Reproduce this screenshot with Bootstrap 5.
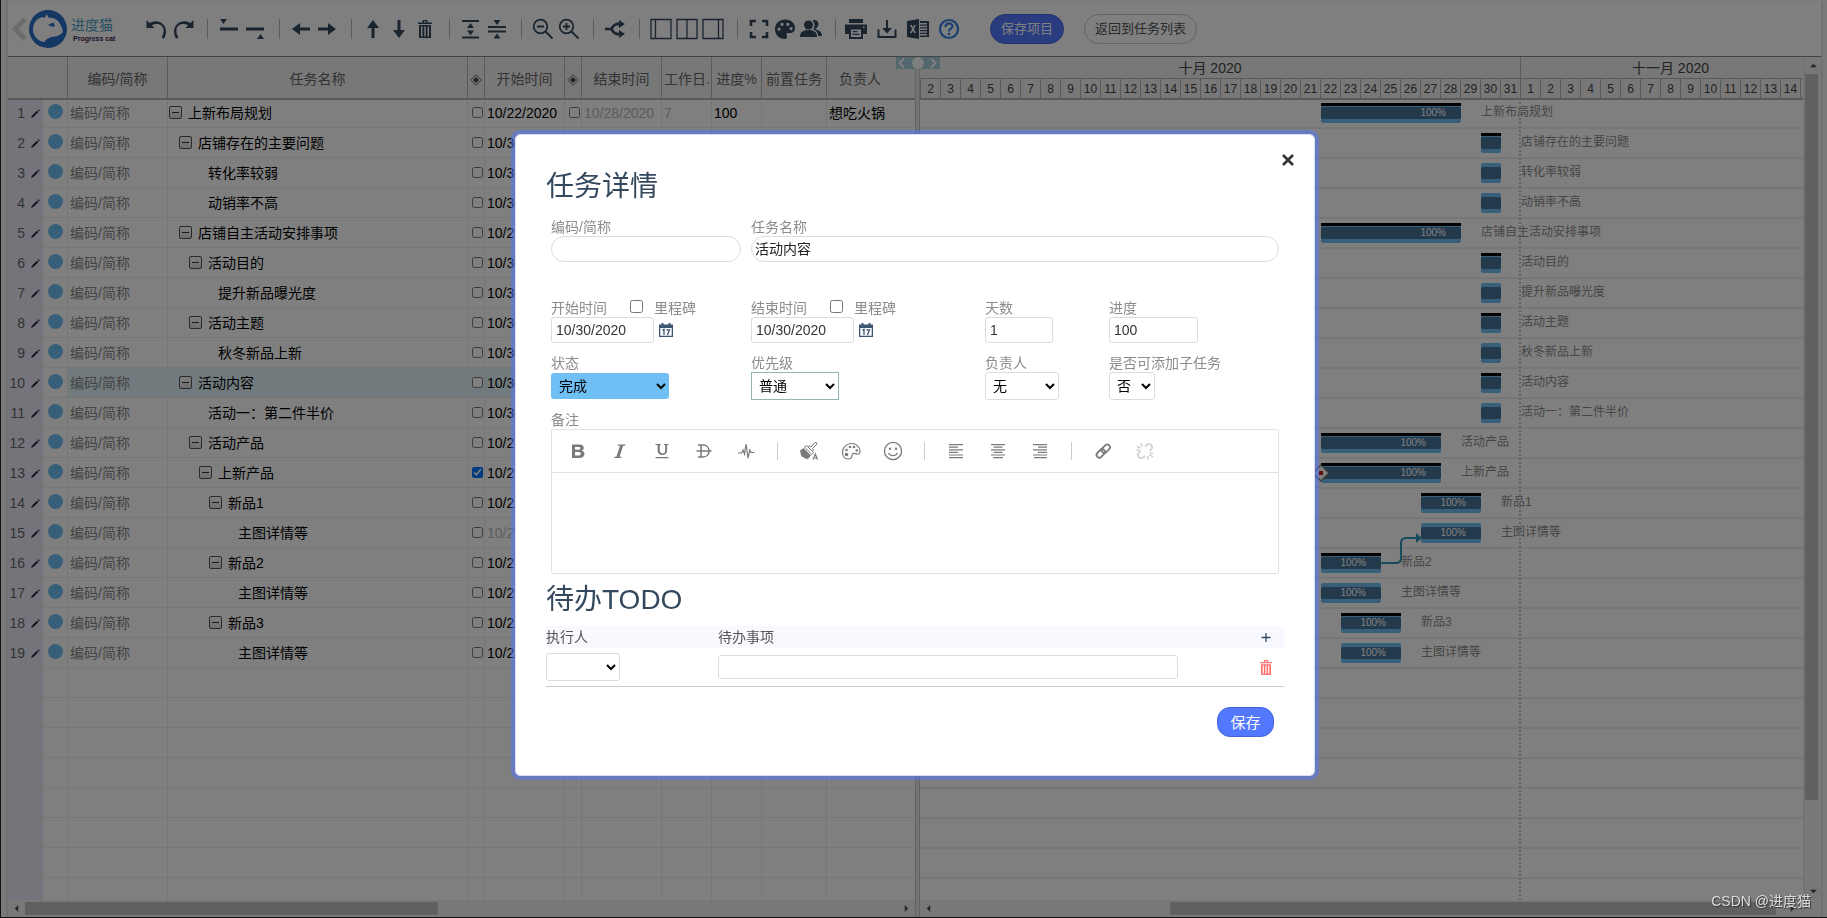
<!DOCTYPE html>
<html lang="zh-CN">
<head>
<meta charset="utf-8">
<meta name="viewport" content="width=device-width, initial-scale=1">
<title>进度猫</title>
<link href="https://cdn.jsdelivr.net/npm/bootstrap@5.3.0/dist/css/bootstrap.min.css" rel="stylesheet">
<style>
  :root { --line:#ededed; --head-line:#b4b4b4; --ink:#34495e; --day:20px; --row:30px; }
  body { font-family:"Liberation Sans","Noto Sans CJK SC",sans-serif; font-size:14px; line-height:18px; color:#000; background:#fff; }
  button { font:inherit; }
  .app-frame { height:100vh; padding:1px 4px 0 5px; border-left:1px solid #223; border-bottom:1px solid #222; background:#f4f4f4; }
  .app-inner { background:#fff; border-left:2px solid #e2e2e2; border-right:2px solid #e2e2e2; }
  /* toolbar */
  .tool-strip { height:57px; border-bottom:1px solid #888; color:var(--ink); padding-left:3px; }
  .brand-word { width:54px; color:#4e9fc4; font-size:14px; line-height:20px; }
  .brand-word span { display:block; font-size:7px; line-height:8px; font-weight:bold; color:#402850; padding-left:2px; }
  .brand-logo { margin-left:2px; }
  .tool-nav { margin-left:19px; }
  .tool { width:26px; height:30px; padding:0; border:0; background:none; color:inherit; display:flex; align-items:center; justify-content:center; flex:none; }
  .tool svg, .ed-tool svg { width:22px; height:22px; fill:currentColor; }
  .tool-gap { width:1px; height:20px; background:#b8b8b8; margin:0 8px 0 11px; flex:none; }
  .tools-wide { margin-left:-4px; }
  .tools-wide .tool { width:31px; }
  .pill { height:30px; border-radius:15px; font-size:13px; line-height:18px; padding:0 10px; border:1px solid #c8c8c8; background:#fff; color:#555; white-space:nowrap; margin-left:20px; }
  .pill-main { background:#5178ff; border-color:#4463d8; color:#fff; margin-left:26px; }
  /* grid */
  .grid-pane { width:907px; flex:none; }
  .task-grid { width:100%; table-layout:fixed; border-collapse:separate; border-spacing:0; white-space:nowrap; }
  .task-grid th { height:41px; background:#f0f0f0; border-right:1px solid var(--head-line); box-shadow:0 2px 0 var(--head-line); position:relative; font-weight:normal; color:#666; text-align:center; padding:2px 2px 0; overflow:hidden; }
  .task-grid td { height:var(--row); border-right:1px solid var(--line); border-bottom:1px solid var(--line); padding:0 2px; overflow:hidden; }
  .task-grid th:last-child, .task-grid td:last-child { border-right:0; }
  .task-grid th:last-child { padding-right:24px; }
  .task-grid td.name-cell { padding-left:1px; }
  .task-grid td.num-cell { padding:0; background:linear-gradient(90deg,#ebe9f5 35px,transparent 35px); }
  .num-box { width:17px; text-align:right; color:#666; }
  .num-cell svg { width:9px; height:9px; margin:2px 1px 0 6px; fill:#222c3c; }
  .dot { width:15px; height:15px; border-radius:50%; background:#6fbff5; margin-left:7px; margin-bottom:3px; }
  .active-row td { background-color:#e2f4fa; }
  .fold { width:13px; height:13px; padding:0; border:1px solid #555; border-radius:2px; background:linear-gradient(#fff,#ddd); margin-right:6px; position:relative; flex:none; }
  .fold::after { content:""; position:absolute; left:2px; right:2px; top:5px; height:1px; background:#333; }
  .fold-none { width:19px; flex:none; }
  .task-grid input { width:11px; height:11px; margin:0 0 0 2px; display:block; }
  .task-grid .box-cell { padding-left:2px; }
  .muted { color:#888; } .faint { color:#b8b8b8; }
  /* splitter */
  .splitter { width:5px; flex:none; background:#e6e6e6; border-left:1px solid #c6c6c6; border-right:1px solid #c6c6c6; position:relative; z-index:2; }
  .split-grip { position:absolute; left:-20px; top:0; width:44px; height:12px; background:#a5d0dc; }
  .split-grip svg { display:block; overflow:visible; }
  /* timeline */
  .time-pane { min-width:0; }
  .month-row { height:22px; color:#444; border-bottom:1px solid var(--head-line); background:#f0f0f0; }
  .month-row div { flex:none; text-align:center; line-height:22px; }
  .month-oct { width:600px; padding-right:20px; }
  .month-nov { width:300px; border-left:1px solid var(--head-line); }
  .day-row { height:19px; background:#f0f0f0; position:relative; z-index:1; box-shadow:0 2px 0 var(--head-line); }
  .day-row div { width:var(--day); flex:none; border-left:1px solid var(--head-line); text-align:center; font-size:12px; line-height:20px; color:#444; }
  .lane { height:var(--row); border-top:1px solid var(--line); border-bottom:1px solid var(--line); padding:4px 0 0 1px; white-space:nowrap; }
  .bar { height:20px; border-radius:2px; background:#6fbff5; padding-top:4px; position:relative; flex:none; }
  .bar-in { height:12px; border-radius:2px; background:#467498; color:#fff; font-size:10px; line-height:12px; text-align:right; padding-right:15px; overflow:hidden; }
  .bar.parent { border-top:3px solid #000; padding-top:1px; border-radius:0 0 2px 2px; }
  .bar-label { margin-left:20px; font-size:12px; color:#8c8c8c; }
  .diamond { position:absolute; left:-9px; top:-2px; width:18px; height:18px; }
  .month-line { position:absolute; left:599px; top:0; bottom:0; width:2px; background:repeating-linear-gradient(#c8c8c8 0 2px,transparent 2px 4px); }
  .link-line { position:absolute; left:461px; top:430px; width:42px; height:40px; }
  /* scrollbars */
  .vbar { width:18px; flex:none; background:#f1f1f1; border-left:2px solid #e8e8e8; padding:0 3px 0 0; }
  .vbar-thumb { background:#c1c1c1; flex:723; }
  .vbar-rest { flex:83; }
  .hbars { height:17px; background:#f1f1f1; flex:none; }
  .hbars .thumb { height:13px; background:#c1c1c1; }
  .caret { width:17px; height:17px; display:flex; align-items:center; justify-content:center; flex:none; }
  .caret svg { width:7px; height:7px; fill:#505050; }
  /* dialog */
  .task-modal { padding-left:3px; }
  .task-modal .modal-dialog { max-width:800px; margin:134px auto 0; }
  .task-modal .modal-content { border:1px solid #d8def4; border-radius:5px; box-shadow:0 0 0 4px rgba(81,120,255,.5); padding:32px 30px 38px; }
  .dlg-title { font-size:28px; line-height:40px; font-weight:normal; color:var(--ink); margin:0; }
  .dlg-close { position:absolute; right:17px; top:16px; width:18px; height:18px; padding:3px; border:0; background:none; display:flex; }
  .fields { margin:0 5px; }
  .fields label { color:#8c8c8c; display:block; }
  .grid-a { display:grid; grid-template-columns:190fr 528fr; gap:10px; margin-top:11px; }
  .grid-b { display:grid; grid-template-columns:200fr 234fr 124fr 170fr; row-gap:11px; margin-top:37px; }
  .box { border:1px solid #dcdcdc; border-radius:3px; background:#fff; height:26px; padding:0 4px; color:#333; display:block; font-size:14px; }
  .box.round { border-radius:13px; padding:0 3px 2px; width:100%; color:#222; }
  .w-date { width:103px; } .w-days { width:68px; } .w-prog { width:89px; } .w-status { width:118px; } .w-prio { width:88px; } .w-who { width:74px; } .w-yes { width:46px; }
  select.box { height:28px; color:#000; padding:0 2px 0 3px; }
  select.box.w-status { height:26px; margin-top:1px; border:0; background:#6fbff5; padding:0 3px 0 4px; }
  select.box.w-prio { border-color:#8fb5b5; border-radius:0; }
  .mile { position:absolute; left:79px; top:0; }
  .mile input { width:13px; height:13px; margin:0 11px 3px 0; }
  .cal { width:14px; height:14px; margin-left:5px; }
  .editor { border:1px solid #e2e2e2; border-radius:2px; }
  .ed-bar { height:43px; border-bottom:1px solid #e2e2e2; padding-left:5px; color:#7a7a7a; }
  .ed-tool { width:42px; height:30px; border:0; padding:0; background:none; color:inherit; display:flex; align-items:center; justify-content:center; flex:none; }
  .ed-tool svg { width:20px; height:20px; }
  .ed-gap { width:1px; height:18px; background:#ccc; margin:0 10px; flex:none; }
  .note-label { margin-top:11px; }
  .editor textarea { display:block; width:100%; height:100px; border:0; resize:none; padding:8px; outline:0; }
  .todo-title { margin-top:6px; }
  .todo { width:100%; table-layout:fixed; border-bottom:1px solid #ccc; border-collapse:separate; border-spacing:0; margin-top:6px; }
  .todo th { height:22px; background:#f8f9ff; color:#555; font-weight:normal; padding:0; }
  .todo td { height:38px; padding:0; }
  .todo .box.line { width:460px; height:24px; }
  .icon-btn { border:0; background:none; padding:0; display:block; width:36px; height:18px; }
  .icon-btn svg { display:block; margin-left:9px; }
  .save-btn { width:57px; height:30px; padding:2px 0 0; border:1px solid #4463d8; border-radius:13px; background:#5178ff; color:#fff; font-size:15px; line-height:20px; margin:20px 10px 0 auto; display:block; }
  .watermark { position:fixed; right:16px; bottom:8px; z-index:1060; color:#ddd; text-shadow:1px 1px 1px #333; pointer-events:none; }
</style>
</head>
<body>
<svg width="0" height="0" class="position-absolute">
  <symbol id="bin" viewBox="0 0 14 18"><path d="M4.500 0h5v2.500H14V4H0V2.500h4.500zM6 1.200v1.300h2V1.200zM1 5h12v13H1zM3 6.500v10h1.400v-10zm3.300 0v10h1.400v-10zm3.300 0v10H11v-10z" fill-rule="evenodd"/></symbol>
</svg>

<div class="app-frame">
<div class="app-inner h-100 d-flex flex-column overflow-hidden">
  <header class="tool-strip d-flex align-items-center">
    <svg width="16" height="24" viewBox="0 0 16 24" fill="none" stroke="#d8d8dc" stroke-width="5"><path d="M14 2 4 12l10 10"/></svg>
    <svg class="brand-logo" width="38" height="38" viewBox="0 0 38 38"><circle cx="19" cy="19" r="19" fill="#2b6fc8"/><path d="M17 4c1 1 2 2 2.500 3.500 7 .5 10 3 11.500 6.500 1.500 3 2.500 5 3 8-2 2.500-5 4-8 4.500-3 .5-5 .5-6 1.500-.8 1-3 .5-4.500 4C8 31 4 25 4 19.500 4 14 7 9 12 7.500c2-.6 3.500 0 4 0 .8-1 1-2 1-3.500z" fill="#fff"/><path d="M19 15l4-2 1.500-.5 1 2.500.5 1.500-3.500 0z" fill="#2b6fc8"/></svg>
    <div class="brand-word ms-1">进度猫<span>Progress cat</span></div>
    <nav class="tool-nav d-flex align-items-center" aria-label="工具">
      <button class="tool" aria-label="撤销"><svg viewBox="0 0 22 22"><path d="M.5 2v8h8L5.800 7.300C12 4 18.500 7 17.500 14c-.3 2-1 4-2 5.500l2.500 1.200C24.500 9 14-1 3.500 5z"/></svg></button>
      <button class="tool" aria-label="重做"><svg viewBox="0 0 22 22"><path d="M21.500 2v8h-8l2.700-2.700C10 4 3.500 7 4.500 14c.3 2 1 4 2 5.500L4 20.700C-2.500 9 8-1 18.500 5z"/></svg></button>
      <span class="tool-gap"></span>
      <button class="tool" aria-label="升级"><svg viewBox="0 0 22 22"><path d="M2 1h7L5.500 6zM2 9.500h18v3H2z"/></svg></button>
      <button class="tool" aria-label="降级"><svg viewBox="0 0 22 22"><path d="M2 9.500h18v3H2zM13 21h7l-3.500-5z"/></svg></button>
      <span class="tool-gap"></span>
      <button class="tool" aria-label="左移"><svg viewBox="0 0 22 22"><path d="M2 11l8-6v4.500h10v3H10V17z"/></svg></button>
      <button class="tool" aria-label="右移"><svg viewBox="0 0 22 22"><path d="M20 11l-8-6v4.500H2v3h10V17z"/></svg></button>
      <span class="tool-gap"></span>
      <button class="tool" aria-label="上移"><svg viewBox="0 0 22 22"><path d="M11 2l6 8h-4.500v10h-3V10H5z"/></svg></button>
      <button class="tool" aria-label="下移"><svg viewBox="0 0 22 22"><path d="M11 20l6-8h-4.500V2h-3v10H5z"/></svg></button>
      <button class="tool" aria-label="删除"><svg viewBox="0 0 22 22"><use href="#bin" x="4" y="2" width="14" height="18"/></svg></button>
      <span class="tool-gap"></span>
      <button class="tool" aria-label="展开"><svg viewBox="0 0 22 22"><path d="M2 2h17v2H2zM2 18.500h17v2H2zM10.500 5l3.500 5H7zM10.500 17.500L7 12.500h7z"/></svg></button>
      <button class="tool" aria-label="折叠"><svg viewBox="0 0 22 22"><path d="M2 8h18v2H2zM2 12.500h18v2H2zM7.500 2h7L11 7zM7.500 20.500h7L11 15.500z"/></svg></button>
      <span class="tool-gap"></span>
      <button class="tool" aria-label="缩小"><svg viewBox="0 0 22 22" style="fill:none" stroke="currentColor" stroke-width="1.800"><circle cx="8.500" cy="8.500" r="6.800"/><path d="M5 8.500h7M13.500 13.500l7 7"/></svg></button>
      <button class="tool" aria-label="放大"><svg viewBox="0 0 22 22" style="fill:none" stroke="currentColor" stroke-width="1.800"><circle cx="8.500" cy="8.500" r="6.800"/><path d="M5 8.500h7M8.500 5v7M13.500 13.500l7 7"/></svg></button>
      <span class="tool-gap"></span>
      <button class="tool" aria-label="关联"><svg viewBox="0 0 22 22"><path d="M1 9.700h5.500C9 6 11 4.500 15 4.500V2l6 4-6 4V7.200c-3 0-4.500 1-6 3.800 1.500 2.800 3 3.800 6 3.800V12l6 4-6 4v-2.500c-4 0-6-1.500-8.500-5.200H1z"/></svg></button>
      <span class="tool-gap"></span>
      <button class="tool" aria-label="左栏"><svg viewBox="0 0 22 22" style="fill:none" stroke="currentColor" stroke-width="1.300"><path d="M1 1.500h20v19H1zM5.500 1.500v19"/></svg></button>
      <button class="tool" aria-label="中栏"><svg viewBox="0 0 22 22" style="fill:none" stroke="currentColor" stroke-width="1.300"><path d="M1 1.500h20v19H1zM11 1.500v19"/></svg></button>
      <button class="tool" aria-label="右栏"><svg viewBox="0 0 22 22" style="fill:none" stroke="currentColor" stroke-width="1.300"><path d="M1 1.500h20v19H1zM16.500 1.500v19"/></svg></button>
      <span class="tool-gap"></span>
      <button class="tool" aria-label="全屏"><svg viewBox="0 0 22 22" style="fill:none" stroke="currentColor" stroke-width="2.600"><path d="M3 8V3h5M14 3h5v5M19 14v5h-5M8 19H3v-5"/></svg></button>
      <button class="tool" aria-label="配色"><svg viewBox="0 0 22 22"><path fill-rule="evenodd" d="M11 1.500c6 0 10 3.500 10 8.500 0 3-2 5-5 5h-2c-1.500 0-2 1.500-1.200 2.600.9 1.500 0 3.400-1.800 3.400C5 21 1 16.500 1 11.200S5 1.500 11 1.500zM5 9.500a1.600 1.600 0 1 0 .1 0zM8 4.800a1.600 1.600 0 1 0 .1 0zM13.800 4.800a1.600 1.600 0 1 0 .1 0zM17 9a1.600 1.600 0 1 0 .1 0z"/></svg></button>
      <button class="tool" aria-label="成员"><svg viewBox="0 0 22 22"><circle cx="8.500" cy="7" r="4.500"/><path d="M0 19c0-5 3-7 8.500-7s8.500 2 8.500 7zM12.500 2.500C17 .8 19.500 5 18 8c-.7 1.600-1.800 2.500-3 2.800 1.400 1.500 7 1.500 7 7.200h-3.700c-.3-3.500-2-5.600-5-6.500 1.800-2.500 2-6-.8-9z"/></svg></button>
      <span class="tool-gap"></span>
      <div class="tools-wide d-flex">
        <button class="tool" aria-label="打印"><svg viewBox="0 0 22 22"><path fill-rule="evenodd" d="M4 1h14v4H4zM0 6.500h22V16h-4v5H4v-5H0zM6 11.500V19h10v-7.500zM7.500 13h5v1.300h-5zm0 2.700h7V17h-7zM18 8.500V10h1.500V8.500z"/></svg></button>
        <button class="tool" aria-label="下载"><svg viewBox="0 0 22 22"><path d="M10 2h2v8h4l-5 5.500L6 10h4zM1.500 11.500h2V18h15v-6.500h2V20h-19z"/></svg></button>
        <button class="tool" aria-label="导出表格"><svg viewBox="0 0 22 22"><path fill-rule="evenodd" d="M0 3l12-2v20L0 19zM3 7l2.200 4L3 15h1.800L6 12.500 7.300 15H9l-2.200-4L9 7H7.300L6 9.500 4.800 7zM13 3h9v16h-9v-1.500h7V16h-7v-1.200h7v-1.500h-7V12h7v-1.500h-7V9.300h7V7.800h-7V6.500h7V5h-7z"/></svg></button>
        <button class="tool" aria-label="帮助"><svg viewBox="0 0 22 22" style="fill:none" stroke="#3480e0" stroke-width="2.200"><circle cx="11" cy="11" r="9"/><path d="M7.500 9c0-5 7-4.500 7-.8 0 2.300-3.500 2.500-3.500 5.300M11 14.800v2.400"/></svg></button>
      </div>
      <button class="pill pill-main">保存项目</button>
      <button class="pill">返回到任务列表</button>
    </nav>
  </header>

  <div class="d-flex flex-fill overflow-hidden">
    <section class="grid-pane overflow-hidden">
      <table class="task-grid">
        <colgroup><col style="width:60px"><col style="width:100px"><col style="width:300px"><col style="width:17px"><col style="width:80px"><col style="width:17px"><col style="width:80px"><col style="width:50px"><col style="width:50px"><col style="width:65px"><col></colgroup>
        <thead><tr><th></th><th>编码/简称</th><th>任务名称</th><th class="px-0"><svg width="12" height="12" viewBox="0 0 12 12"><path d="M6 .7 11.300 6 6 11.300.7 6z" fill="none" stroke="#666"/><path d="M6 3l3 3-3 3-3-3z" fill="#34495e"/></svg></th><th>开始时间</th><th class="px-0"><svg width="12" height="12" viewBox="0 0 12 12"><path d="M6 .7 11.300 6 6 11.300.7 6z" fill="none" stroke="#666"/><path d="M6 3l3 3-3 3-3-3z" fill="#34495e"/></svg></th><th>结束时间</th><th class="text-start">工作日.</th><th>进度%</th><th class="px-0">前置任务</th><th>负责人</th></tr></thead>
        <tbody id="gridBody"></tbody>
      </table>
    </section>
    <div class="splitter"><div class="split-grip"><svg width="44" height="12" viewBox="0 0 44 12"><path d="M8 1.500 3.500 6 8 10.500M35 1.500 39.500 6 35 10.500" fill="none" stroke="#fff" stroke-width="2"/><circle cx="22" cy="6" r="6" fill="#fff"/></svg></div></div>
    <section class="time-pane flex-fill overflow-hidden d-flex flex-column">
      <div class="month-row d-flex overflow-hidden"><div class="month-oct">十月 2020</div><div class="month-nov">十一月 2020</div></div>
      <div class="day-row d-flex" id="dayRow"></div>
      <div class="flex-fill overflow-hidden position-relative">
        <div class="month-line"></div>
        <div id="lanes"></div>
        <svg class="link-line" viewBox="0 0 42 40"><path d="M0 35h15q5 0 5-5V15q0-5 5-5h11" fill="none" stroke="#3296be" stroke-width="2"/><path d="M35 5l6 5-6 5z" fill="#3296be"/></svg>
      </div>
    </section>
    <div class="vbar d-flex flex-column">
      <span class="caret"><svg viewBox="0 0 8 8"><path d="M0 6l4-4 4 4z"/></svg></span>
      <div class="vbar-thumb"></div><div class="vbar-rest"></div>
      <span class="caret"><svg viewBox="0 0 8 8"><path d="M0 2l4 4 4-4z"/></svg></span>
    </div>
  </div>

  <div class="hbars d-flex align-items-center">
    <div class="grid-pane d-flex align-items-center">
      <span class="caret"><svg viewBox="0 0 8 8"><path d="M6 0 2 4l4 4z"/></svg></span>
      <div class="thumb" style="width:413px"></div>
      <span class="caret ms-auto"><svg viewBox="0 0 8 8"><path d="M2 0l4 4-4 4z"/></svg></span>
    </div>
    <div class="splitter align-self-stretch"></div>
    <div class="flex-fill d-flex align-items-center pe-3">
      <span class="caret"><svg viewBox="0 0 8 8"><path d="M6 0 2 4l4 4z"/></svg></span>
      <div class="thumb ms-auto" style="width:606px"></div>
      <span class="caret ms-2 me-1"><svg viewBox="0 0 8 8"><path d="M2 0l4 4-4 4z"/></svg></span>
    </div>
  </div>
</div>
</div>

<div class="modal-backdrop show"></div>

<div class="modal d-block task-modal" tabindex="-1" role="dialog" aria-labelledby="dlgTitle">
  <div class="modal-dialog">
    <div class="modal-content">
      <button class="dlg-close" aria-label="关闭"><svg width="12" height="12" viewBox="0 0 12 12"><path d="M1 1l10 10M11 1 1 11" stroke="#333" stroke-width="2.600"/></svg></button>
      <h2 class="dlg-title" id="dlgTitle">任务详情</h2>
      <div class="fields">
        <div class="grid-a">
          <div><label for="code">编码/简称</label><input class="box round" id="code" type="text"></div>
          <div><label for="name">任务名称</label><input class="box round" id="name" type="text" value="活动内容"></div>
        </div>
        <div class="grid-b">
          <div class="position-relative"><label for="start">开始时间</label>
            <label class="mile d-flex align-items-center"><input type="checkbox">里程碑</label>
            <div class="d-flex align-items-center"><input class="box w-date" id="start" type="text" value="10/30/2020"><svg class="cal" viewBox="0 0 14 14"><path fill="#3d5573" fill-rule="evenodd" d="M2.500 0h2v1.500h5V0h2v1.500H14V14H0V1.500h2.500zM1.300 5v7.700h11.400V5z"/><path d="M3.300 7l1.700-.7V12M7.300 6.800h3.200L8.500 12" fill="none" stroke="#3d5573" stroke-width="1.300"/></svg></div></div>
          <div class="position-relative"><label for="end">结束时间</label>
            <label class="mile d-flex align-items-center"><input type="checkbox">里程碑</label>
            <div class="d-flex align-items-center"><input class="box w-date" id="end" type="text" value="10/30/2020"><svg class="cal" viewBox="0 0 14 14"><path fill="#3d5573" fill-rule="evenodd" d="M2.500 0h2v1.500h5V0h2v1.500H14V14H0V1.500h2.500zM1.300 5v7.700h11.400V5z"/><path d="M3.300 7l1.700-.7V12M7.300 6.800h3.200L8.500 12" fill="none" stroke="#3d5573" stroke-width="1.300"/></svg></div></div>
          <div><label for="days">天数</label><input class="box w-days" id="days" type="text" value="1"></div>
          <div><label for="prog">进度</label><input class="box w-prog" id="prog" type="text" value="100"></div>
          <div><label for="status">状态</label><select class="box w-status" id="status"><option>完成</option></select></div>
          <div><label for="prio">优先级</label><select class="box w-prio" id="prio"><option>普通</option></select></div>
          <div><label for="who">负责人</label><select class="box w-who" id="who"><option>无</option></select></div>
          <div><label for="sub">是否可添加子任务</label><select class="box w-yes" id="sub"><option>否</option></select></div>
        </div>
        <label for="note" class="note-label">备注</label>
        <div class="editor">
          <div class="ed-bar d-flex align-items-center">
            <button class="ed-tool" aria-label="加粗"><svg viewBox="0 0 20 20"><path fill-rule="evenodd" d="M4 3.500h7.500c5 0 5.500 5 2.200 6.200 4.300 1 3.600 7.300-2.200 7.300H4zM7 6v2.700h3.800c2 0 2-2.700 0-2.700zm0 5v3.500h4c2.400 0 2.400-3.500 0-3.500z"/></svg></button>
            <button class="ed-tool" aria-label="斜体"><svg viewBox="0 0 20 20"><path d="M8 3.500h7.500l-.4 1.200h-2L9.500 15.800h2l-.4 1.200H4l.4-1.200h2L10 4.700H7.600z"/></svg></button>
            <button class="ed-tool" aria-label="下划线"><svg viewBox="0 0 20 20"><path d="M3.500 3H9v1H7.800v5.500c0 4 5.400 4 5.400 0V4H12V3h4.500v1h-1.400v5.500c0 6-9.500 6-9.500 0V4H3.500zM3.500 16h13v1.300h-13z"/></svg></button>
            <button class="ed-tool" aria-label="删除线"><svg viewBox="0 0 20 20" style="fill:none" stroke="currentColor" stroke-width="1.500"><path d="M4 4h5c8 0 8 12 0 12H4M7 4v12M2.500 10h15"/></svg></button>
            <button class="ed-tool" aria-label="波形"><svg viewBox="0 0 20 20" style="fill:none" stroke="currentColor" stroke-width="1.200"><path d="M2 12h3.500l1.500-3 1.500 4L10 3l2 14 1.800-8 1.200 2.500h3.500"/></svg></button>
            <span class="ed-gap"></span>
            <button class="ed-tool" aria-label="格式刷"><svg viewBox="0 0 20 20"><path d="M1 9.500 4.500 7l7.500 7.500-3.500 4-1.500-1.500-.7 1L4 15.800l-1 .5-1-2.300z"/><path d="M5.500 6l2-1.500 7 7-1.700 2zM9 6l1.500-1 1.500 1L16 1.500q2-.5 2 1.500L13.500 7.500l1 1.500-1 1.500" fill="none" stroke="currentColor"/><path d="M14 18.500l2.300-5.500 2.300 5.500M15 17h3" fill="none" stroke="currentColor" stroke-width="1.200"/></svg></button>
            <button class="ed-tool" aria-label="颜色"><svg viewBox="0 0 20 20" style="fill:none" stroke="currentColor" stroke-width="1.200"><path d="M10.500 2.500c5 0 8.500 3.500 8.500 8 0 2.500-1.500 3-3 2.500-2.500-1-5-1-5 1.500 0 2-1.500 3.500-4 3.500C3.500 18 1.500 15 1.500 11.500c0-5 4-9 9-9z"/><g style="fill:currentColor" stroke="none"><circle cx="5.500" cy="13.500" r="1.800"/><circle cx="5.500" cy="9" r="1.300"/><circle cx="9" cy="6" r="1.300"/><circle cx="13" cy="6" r="1.300"/><circle cx="15.800" cy="9.500" r="1.300"/></g></svg></button>
            <button class="ed-tool" aria-label="表情"><svg viewBox="0 0 20 20" style="fill:none" stroke="currentColor" stroke-width="1.300"><circle cx="10" cy="10" r="8.600"/><path d="M5.500 12c2 3.500 7 3.500 9 0"/><g style="fill:currentColor" stroke="none"><circle cx="7" cy="7.800" r="1.200"/><circle cx="13" cy="7.800" r="1.200"/></g></svg></button>
            <span class="ed-gap"></span>
            <button class="ed-tool" aria-label="左对齐"><svg viewBox="0 0 20 20"><path d="M3 3h14v1.200H3zM3 5.600h9v1.200H3zM3 8.200h14v1.200H3zM3 10.800h9V12H3zM3 13.400h14v1.200H3zM3 16h14v1.200H3z"/></svg></button>
            <button class="ed-tool" aria-label="居中"><svg viewBox="0 0 20 20"><path d="M3 3h14v1.200H3zM5.500 5.600h9v1.200h-9zM3 8.200h14v1.200H3zM5.500 10.800h9V12h-9zM3 13.400h14v1.200H3zM5 16h10v1.200H5z"/></svg></button>
            <button class="ed-tool" aria-label="右对齐"><svg viewBox="0 0 20 20"><path d="M3 3h14v1.200H3zM8 5.600h9v1.200H8zM3 8.200h14v1.200H3zM8 10.800h9V12H8zM3 13.400h14v1.200H3zM4 16h13v1.200H4z"/></svg></button>
            <span class="ed-gap"></span>
            <button class="ed-tool" aria-label="链接"><svg viewBox="0 0 20 20" style="fill:none" stroke="currentColor" stroke-width="1.800"><rect x="8" y="5" width="9.500" height="5.500" rx="2.700" transform="rotate(-45 12.700 7.700)"/><rect x="3" y="9.700" width="9.500" height="5.500" rx="2.700" transform="rotate(-45 7.700 12.400)"/></svg></button>
            <button class="ed-tool" aria-label="取消链接" disabled><svg viewBox="0 0 20 20" style="fill:none" stroke="#d2d2d2" stroke-width="1.700"><path d="M10 5.500l2-2c3-2 6.500 1.500 4.500 4.500L14.500 10M10 15l-2 1.500c-3 2-6.500-1.500-4.500-4.500L5.500 10M6 2l1 3.500M2 5l3.500 2M1.500 9H5M18.500 12H15M18 16l-3.500-2.500M13 18.500L12.500 15"/></svg></button>
          </div>
          <textarea id="note"></textarea>
        </div>
      </div>
      <h2 class="dlg-title todo-title">待办TODO</h2>
      <table class="todo">
        <colgroup><col style="width:172px"><col><col style="width:36px"></colgroup>
        <thead><tr><th>执行人</th><th>待办事项</th><th><button class="icon-btn" aria-label="添加"><svg width="18" height="18" viewBox="0 0 18 18"><path d="M9 5v9M4.500 9.500h9" stroke="#34495e" stroke-width="1.300"/></svg></button></th></tr></thead>
        <tbody><tr><td><select class="box w-who" aria-label="执行人"><option></option></select></td><td><input class="box line" type="text" aria-label="待办事项"></td><td><button class="icon-btn" aria-label="删除"><svg width="18" height="18" viewBox="0 0 18 18"><use href="#bin" x="3" y="2" width="12" height="15" fill="#ff6f6f"/></svg></button></td></tr></tbody>
      </table>
      <button class="save-btn">保存</button>
    </div>
  </div>
</div>
<div class="watermark">CSDN @进度猫</div>

<script src="https://cdn.jsdelivr.net/npm/bootstrap@5.3.0/dist/js/bootstrap.bundle.min.js"></script>
<script>
  // name, level, has children, first day, length in days, start date
  const tasks = [
    ['上新布局规划',0,1,22,7,'10/22/2020'], ['店铺存在的主要问题',1,1,30,1,'10/30/2020'],
    ['转化率较弱',2,0,30,1,'10/30/2020'], ['动销率不高',2,0,30,1,'10/30/2020'],
    ['店铺自主活动安排事项',1,1,22,7,'10/22/2020'], ['活动目的',2,1,30,1,'10/30/2020'],
    ['提升新品曝光度',3,0,30,1,'10/30/2020'], ['活动主题',2,1,30,1,'10/30/2020'],
    ['秋冬新品上新',3,0,30,1,'10/30/2020'], ['活动内容',1,1,30,1,'10/30/2020'],
    ['活动一：第二件半价',2,0,30,1,'10/30/2020'], ['活动产品',2,1,22,6,'10/22/2020'],
    ['上新产品',3,1,22,6,'10/22/2020'], ['新品1',4,1,27,3,'10/27/2020'],
    ['主图详情等',5,0,27,3,'10/27/2020'], ['新品2',4,1,22,3,'10/22/2020'],
    ['主图详情等',5,0,22,3,'10/22/2020'], ['新品3',4,1,23,3,'10/23/2020'],
    ['主图详情等',5,0,23,3,'10/23/2020']
  ];
  const pen = '<svg viewBox="0 0 10 10"><path d="M0 10l1-2.600 5.500-5.500 1.600 1.600L2.600 9zM7.200 1.200 8.200.2l1.600 1.600-1 1z"/></svg>';
  let rows = '', lanes = '';
  for (let i = 0; i < 27; i++) {
    const t = tasks[i];
    if (!t) {
      rows += '<tr><td class="num-cell"></td>' + '<td></td>'.repeat(10) + '</tr>';
      lanes += '<div class="lane"></div>';
      continue;
    }
    const [name, level, parent, day, len, start] = t, first = i === 0;
    rows += `<tr class="${i === 9 ? 'active-row' : ''}"><td class="num-cell"><div class="d-flex align-items-center"><span class="num-box">${i + 1}</span>${pen}<span class="dot"></span></div></td>
      <td class="muted">编码/简称</td>
      <td class="name-cell"><div class="d-flex align-items-center" style="padding-left:${level * 10}px">${parent ? '<button class="fold" aria-label="折叠"></button>' : '<span class="fold-none"></span>'}${name}</div></td>
      <td class="box-cell"><input type="checkbox" aria-label="开始里程碑" ${i === 12 ? 'checked' : ''}></td><td class="${i === 14 ? 'faint' : ''}">${start}</td>
      <td class="box-cell"><input type="checkbox" aria-label="结束里程碑"></td><td class="faint">${first ? '10/28/2020' : ''}</td>
      <td class="faint">${first ? '7' : ''}</td><td>${first ? '100' : ''}</td><td></td><td>${first ? '想吃火锅' : ''}</td></tr>`;
    lanes += `<div class="lane d-flex"><div class="bar ${parent ? 'parent' : ''}" style="margin-left:${(day - 2) * 20}px;width:${len * 20}px"><div class="bar-in">${len > 1 ? '100%' : ''}</div>${i === 12 ? '<svg class="diamond" viewBox="0 0 18 18"><path d="M9 1l8 8-8 8-8-8z" fill="#fff" stroke="#777" stroke-width="1.400"/><path d="M7 7h4v4H7z" fill="#d02020"/></svg>' : ''}</div><span class="bar-label">${name}</span></div>`;
  }
  document.getElementById('gridBody').innerHTML = rows;
  document.getElementById('lanes').innerHTML = lanes;
  let days = '';
  for (let d = 2; d <= 31; d++) days += `<div>${d}</div>`;
  for (let d = 1; d <= 14; d++) days += `<div>${d}</div>`;
  document.getElementById('dayRow').innerHTML = days + '<div></div>';
</script>
</body>
</html>
